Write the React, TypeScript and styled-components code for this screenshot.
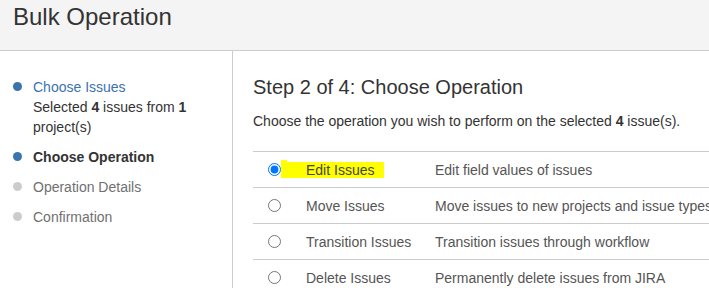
import React, { useState } from "react"
import styled, { createGlobalStyle } from "styled-components"

const GlobalStyle = createGlobalStyle`
    html, body {
        margin: 0;
        padding: 0;
        background: #fff;
        overflow: hidden;
    }

    body {
        font-family: Arial, "Liberation Sans", sans-serif;
        font-size: 14px;
        line-height: 20px;
        color: #333;
    }
`

const Page = styled.div`
    display: flex;
    flex-direction: column;
    height: 288px;
`

const Header = styled.header`
    height: 51px;
    background-color: #f4f4f4;
    border-bottom: 1px solid #ccc;
    padding: 2px 13px 0;
    box-sizing: border-box;
    flex-shrink: 0;
`

const Title = styled.h1`
    margin: 0;
    font-size: 24px;
    line-height: 30px;
    font-weight: normal;
    color: #333;
`

const Body = styled.div`
    display: flex;
    flex: 1;
    min-height: 0;
`

const Sidebar = styled.nav`
    width: 233px;
    flex-shrink: 0;
    box-sizing: border-box;
    border-right: 1px solid #ccc;
    padding: 26px 20px 0 13px;
`

const Steps = styled.ol`
    list-style: none;
    margin: 0;
    padding: 0;
    display: flex;
    flex-direction: column;
    gap: 10px;
`

type StepState = "done" | "current" | "todo"

const Step = styled.li<{ $state: StepState }>`
    display: flex;
    gap: 11px;
    color: ${p => (p.$state === "todo" ? "#707070" : "#333")};
    font-weight: ${p => (p.$state === "current" ? "bold" : "normal")};
`

const Dot = styled.span<{ $active: boolean }>`
    width: 9px;
    height: 9px;
    border-radius: 50%;
    margin-top: 5px;
    flex-shrink: 0;
    background-color: ${p => (p.$active ? "#3b73af" : "#ccc")};
`

const StepLink = styled.a`
    color: #3b73af;
    text-decoration: none;
    display: block;
`

const Main = styled.main`
    flex: 1;
    min-width: 0;
    overflow: hidden;
    padding: 24px 0 0 20px;
`

const StepTitle = styled.h2`
    margin: 0;
    font-size: 20px;
    line-height: 24px;
    font-weight: normal;
    color: #333;
`

const Intro = styled.p`
    margin: 12px 0 20px;
`

const OpTable = styled.table`
    width: 620px;
    border-collapse: collapse;
    color: #555;
`

const Row = styled.tr`
    border-top: 1px solid #ccc;

    td {
        height: 35px;
        padding: 0 10px;
        vertical-align: middle;
        white-space: nowrap;
    }
`

const RadioCell = styled.td`
    width: 43px;
    box-sizing: border-box;
    text-align: center;

    && {
        padding: 0;
    }

    input {
        margin: 0;
        vertical-align: middle;
        position: relative;
        top: -1px;
    }
`

const NameCell = styled.td`
    width: 129px;
    box-sizing: border-box;
`

const Highlight = styled.span`
    position: relative;
    background-color: #ffff00;
    margin-left: -25px;
    padding: 0 10px 0 25px;
    color: #444;

    &::before {
        content: "";
        position: absolute;
        left: 0;
        top: -2px;
        width: 6px;
        height: 2px;
        background-color: #ffff00;
    }
`

const operations = [
    { id: "edit", name: "Edit Issues", desc: "Edit field values of issues" },
    { id: "move", name: "Move Issues", desc: "Move issues to new projects and issue types" },
    { id: "transition", name: "Transition Issues", desc: "Transition issues through workflow" },
    { id: "delete", name: "Delete Issues", desc: "Permanently delete issues from JIRA" },
]

const App = () => {
    const [selected, setSelected] = useState("edit")

    return (
        <Page>
            <GlobalStyle />
            <Header>
                <Title>Bulk Operation</Title>
            </Header>
            <Body>
                <Sidebar>
                    <Steps>
                        <Step $state="done">
                            <Dot $active />
                            <div>
                                <StepLink href="#">Choose Issues</StepLink>
                                Selected <b>4</b> issues from <b>1</b> project(s)
                            </div>
                        </Step>
                        <Step $state="current">
                            <Dot $active />
                            <span>Choose Operation</span>
                        </Step>
                        <Step $state="todo">
                            <Dot $active={false} />
                            <span>Operation Details</span>
                        </Step>
                        <Step $state="todo">
                            <Dot $active={false} />
                            <span>Confirmation</span>
                        </Step>
                    </Steps>
                </Sidebar>
                <Main>
                    <StepTitle>Step 2 of 4: Choose Operation</StepTitle>
                    <Intro>
                        Choose the operation you wish to perform on the selected <b>4</b> issue(s).
                    </Intro>
                    <OpTable>
                        <tbody>
                            {operations.map(op => (
                                <Row key={op.id}>
                                    <RadioCell>
                                        <input
                                            type="radio"
                                            name="operation"
                                            checked={selected === op.id}
                                            onChange={() => setSelected(op.id)}
                                        />
                                    </RadioCell>
                                    <NameCell>
                                        {op.id === "edit" ? <Highlight>{op.name}</Highlight> : op.name}
                                    </NameCell>
                                    <td>{op.desc}</td>
                                </Row>
                            ))}
                        </tbody>
                    </OpTable>
                </Main>
            </Body>
        </Page>
    )
}

export default App
